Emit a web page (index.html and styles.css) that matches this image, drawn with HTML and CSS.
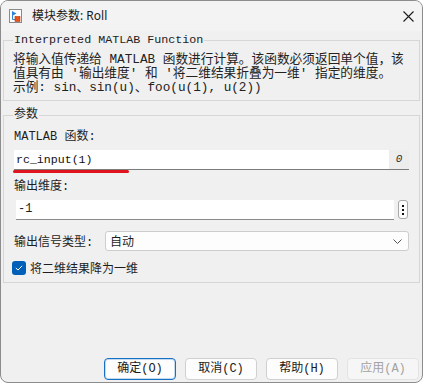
FILE: index.html
```html
<!DOCTYPE html>
<html lang="zh-CN">

<head>
    <meta charset="UTF-8">
    <meta name="viewport" content="width=device-width, initial-scale=1.0">
    <title>模块参数: Roll</title>
    <link rel="stylesheet" href="styles.css">
</head>

<body>
    <div class="window">
        <!-- 标题栏 -->
        <div class="titlebar">
            <svg class="app-icon" width="13" height="14" viewBox="0 0 13 14">
                <rect x="0.5" y="0.5" width="12" height="13" fill="#fff" stroke="#8a8a8a" />
                <path d="M3 2 L7.5 4.5 L3 7 Z" fill="#2f86d6" />
                <path d="M3.5 6 V10.5 H6" stroke="#2f86d6" fill="none" />
                <rect x="6" y="7.5" width="5" height="5" fill="#e8531a" stroke="#b43a0c" stroke-width="0.6" />
            </svg>
            <span class="title">模块参数: Roll</span>
            <svg class="close" width="11" height="11" viewBox="0 0 11 11">
                <path d="M0.5 0.5 L10.5 10.5 M10.5 0.5 L0.5 10.5" stroke="#1b1b1b" stroke-width="1.1" />
            </svg>
        </div>

        <div class="content">
            <fieldset class="group group-desc">
                <legend>Interpreted MATLAB Function</legend>
                <p class="desc">
                    <span>将输入值传递给 MATLAB 函数进行计算。该函数必须返回单个值，该</span>
                    <span>值具有由 '输出维度' 和 '将二维结果折叠为一维' 指定的维度。</span>
                    <span>示例: sin、sin(u)、foo(u(1), u(2))</span>
                </p>
            </fieldset>

            <fieldset class="group group-params">
                <legend>参数</legend>

                <div class="field-label">MATLAB 函数:</div>
                <div class="expr-field">
                    <span class="expr-text">rc_input(1)</span>
                    <span class="expr-count">0</span>
                </div>
                <div class="red-mark"></div>

                <div class="field-label label-dim">输出维度:</div>
                <div class="dim-row">
                    <div class="text-field">-1</div>
                    <div class="dots"><i></i><i></i><i></i></div>
                </div>

                <div class="type-row">
                    <span>输出信号类型:</span>
                    <div class="select">
                        <span>自动</span>
                        <svg width="9" height="5" viewBox="0 0 9 5">
                            <path d="M0.5 0.5 L4.5 4.5 L8.5 0.5" stroke="#555" fill="none" />
                        </svg>
                    </div>
                </div>

                <div class="check-row">
                    <span class="checkbox">
                        <svg width="8" height="6" viewBox="0 0 8 6">
                            <path d="M0.8 3 L3 5 L7.2 0.8" stroke="#fff" stroke-width="1" fill="none" />
                        </svg>
                    </span>
                    <span>将二维结果降为一维</span>
                </div>
            </fieldset>
        </div>

        <!-- 底部按钮 -->
        <div class="button-row">
            <button class="btn btn-default">确定(O)</button>
            <button class="btn">取消(C)</button>
            <button class="btn">帮助(H)</button>
            <button class="btn" disabled>应用(A)</button>
        </div>
    </div>
</body>

</html>
```

FILE: styles.css
```css
body {
    margin: 0;
    background: #ffffff;
    font-family: "Liberation Mono", "Noto Sans CJK SC", monospace;
    font-size: 12px;
    color: #1e1e1e;
}

.window {
    width: 423px;
    height: 383px;
    box-sizing: border-box;
    border: 1px solid #8c8c8c;
    border-radius: 8px;
    overflow: hidden;
    background: #f0f0f0;
    display: flex;
    flex-direction: column;
}

.titlebar {
    height: 30px;
    flex: none;
    display: flex;
    align-items: center;
    background: #f3f3f3;
    padding-left: 8px;
}

.app-icon {
    flex: none;
}

.title {
    margin-left: 10px;
    font-family: "Noto Sans", "Noto Sans CJK SC", sans-serif;
    font-size: 12px;
    line-height: 16px;
    color: #1a1a1a;
}

.close {
    margin-left: auto;
    margin-right: 8px;
}

.content {
    padding-top: 2px;
}

.group {
    margin: 0 2px;
    padding: 0 9px;
    border: 1px solid #d6d6d6;
    min-width: 0;
}

.group legend {
    padding: 0 1px;
    line-height: 14px;
    color: #222;
}

.group-desc legend {
    font-size: 11.7px;
}

.group-desc {
    padding-bottom: 5px;
}

.desc {
    margin: 6px 0 0;
    font-size: 12.7px;
    line-height: 14px;
    color: #222;
}

.desc span {
    display: block;
    white-space: nowrap;
}

.group-params {
    margin-top: 7px;
    padding-bottom: 7px;
}

.field-label {
    margin-top: 7px;
    margin-bottom: 5px;
    padding-left: 1px;
    line-height: 16px;
}

.label-dim {
    margin-top: 6px;
}

.expr-field {
    display: flex;
    height: 20px;
    box-sizing: border-box;
    margin: 0 1px;
    background: #fff;
    border-bottom: 1px solid #7c7c7c;
}

.expr-text {
    flex: 1;
    padding-left: 2px;
    font-size: 11.6px;
    line-height: 19px;
    color: #111;
}

.expr-count {
    width: 20px;
    background: #ededed;
    text-align: center;
    font-style: italic;
    font-size: 11px;
    line-height: 18px;
    color: #333;
}

.red-mark {
    width: 116px;
    height: 3px;
    border-radius: 2px;
    background: #e0141e;
}

.dim-row {
    display: flex;
    gap: 4px;
    padding-left: 3px;
    margin-right: 2px;
}

.text-field {
    flex: 1;
    height: 20px;
    box-sizing: border-box;
    padding-left: 2px;
    background: #fff;
    border-bottom: 1px solid #8a8a8a;
    line-height: 19px;
}

.dots {
    width: 10px;
    height: 19px;
    box-sizing: border-box;
    border: 1px solid #a8a8a8;
    border-radius: 3px;
    background: #fcfcfc;
    display: flex;
    flex-direction: column;
    align-items: center;
    justify-content: center;
    gap: 2px;
}

.dots i {
    width: 2px;
    height: 2px;
    background: #111;
}

.type-row {
    display: flex;
    align-items: center;
    margin-top: 11px;
    padding-left: 1px;
    margin-right: 1px;
}

.select {
    margin-left: auto;
    width: 304px;
    height: 20px;
    box-sizing: border-box;
    border: 1px solid #cdcdcd;
    border-radius: 3px;
    background: #fdfdfd;
    display: flex;
    align-items: center;
    justify-content: space-between;
    padding: 0 6px 0 4px;
    font-family: "Noto Sans CJK SC", sans-serif;
    line-height: 18px;
}

.check-row {
    display: flex;
    align-items: center;
    gap: 4px;
    margin-top: 10px;
    margin-left: -1px;
    height: 14px;
}

.checkbox {
    width: 14px;
    height: 14px;
    box-sizing: border-box;
    border-radius: 3px;
    background: #005fb8;
    display: flex;
    align-items: center;
    justify-content: center;
}

.button-row {
    margin-top: auto;
    display: flex;
    justify-content: flex-end;
    gap: 9px;
    padding: 0 3px 2px 0;
}

.btn {
    width: 72px;
    height: 22px;
    padding: 0;
    border: 1px solid #d0d0d0;
    border-radius: 4px;
    background: #fdfdfd;
    font-family: "Liberation Mono", "Noto Sans CJK SC", monospace;
    font-size: 12px;
    line-height: 20px;
    color: #1a1a1a;
}

.btn-default {
    border-color: #1870c4;
    box-shadow: inset 0 0 0 1px rgba(24, 112, 196, 0.25);
}

.btn:disabled {
    background: #f6f6f6;
    border-color: #e3e3e3;
    color: #a3a3a3;
}
```
